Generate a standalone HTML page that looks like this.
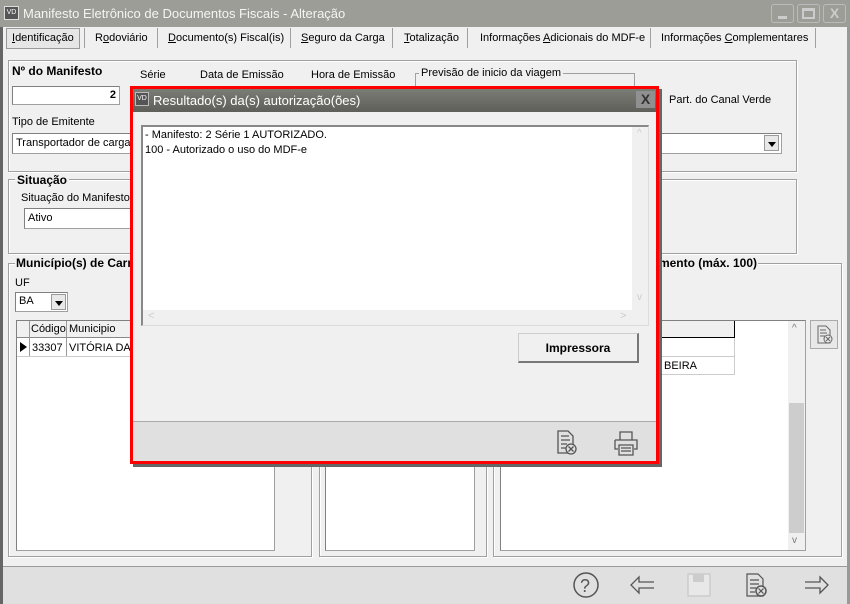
<!DOCTYPE html>
<html><head><meta charset="utf-8"><style>
*{box-sizing:border-box;margin:0;padding:0}
body{width:850px;height:604px;overflow:hidden;background:#f0f0f0;font-family:"Liberation Sans",sans-serif;font-size:11px;color:#000;position:relative}
.a{position:absolute}
.grp{position:absolute;border:1px solid #a0a0a0;box-shadow:inset 1px 1px 0 #fff,1px 1px 0 #fff}
.fld{position:absolute;background:#fff;border:1px solid #a0a0a0;border-top-color:#808080;border-left-color:#808080;padding:2px 3px}
.b{font-weight:bold}
.tab{position:absolute;top:32px;font-size:11px}
.sep{position:absolute;top:28px;width:1px;height:20px;background:#a0a0a0}
.dd{position:absolute;width:15px;height:16px;background:#e8e8e8;border:1px solid #999}
.dd:after{content:"";position:absolute;left:3px;top:6px;border:4px solid transparent;border-top:5px solid #000}
</style></head><body>
<div class="a" style="left:0;top:0;width:850px;height:27px;background:#9d9d97"></div>
<div class="a" style="left:4px;top:6px;width:15px;height:14px;background:#555;color:#fff;font-size:7px;line-height:12px;text-align:center;border:1px solid #ddd">VD</div>
<div class="a" style="left:23px;top:6px;color:#f4f4f4;font-size:13px">Manifesto Eletrônico de Documentos Fiscais - Alteração</div>
<div class="a" style="left:771px;top:4px;width:23px;height:19px;border:1px solid #bbb;border-radius:3px"><div class="a" style="left:6px;top:11px;width:9px;height:3px;background:#ccc"></div></div>
<div class="a" style="left:797px;top:4px;width:23px;height:19px;border:1px solid #bbb;border-radius:3px"><div class="a" style="left:4px;top:3px;width:13px;height:11px;border:2px solid #ccc;border-top-width:3px"></div></div>
<div class="a" style="left:823px;top:4px;width:23px;height:19px;border:1px solid #bbb;border-radius:3px;color:#ccc;font-weight:bold;font-size:14px;text-align:center;line-height:17px">X</div>
<div class="a" style="left:0;top:27px;width:3px;height:577px;background:#666"></div>
<div class="a" style="left:847px;top:27px;width:3px;height:577px;background:#999"></div>
<div class="a" style="left:6px;top:28px;width:74px;height:21px;border:1px solid #999;background:#e6e6e6"></div>
<div class="tab" style="left:12px"><u>I</u>dentificação</div>
<div class="sep" style="left:84px"></div>
<div class="tab" style="left:95px">R<u>o</u>doviário</div>
<div class="sep" style="left:157px"></div>
<div class="tab" style="left:168px"><u>D</u>ocumento(s) Fiscal(is)</div>
<div class="sep" style="left:290px"></div>
<div class="tab" style="left:301px"><u>S</u>eguro da Carga</div>
<div class="sep" style="left:392px"></div>
<div class="tab" style="left:404px"><u>T</u>otalização</div>
<div class="sep" style="left:467px"></div>
<div class="tab" style="left:480px">Informações <u>A</u>dicionais do MDF-e</div>
<div class="sep" style="left:650px"></div>
<div class="tab" style="left:661px">Informações <u>C</u>omplementares</div>
<div class="sep" style="left:815px"></div>
<div class="grp" style="left:8px;top:60px;width:789px;height:112px"></div>
<div class="a b" style="left:12px;top:64px;font-size:12px">Nº do Manifesto</div>
<div class="a" style="left:140px;top:69px">Série</div>
<div class="a" style="left:200px;top:69px">Data de Emissão</div>
<div class="a" style="left:311px;top:69px">Hora de Emissão</div>
<div class="a" style="left:415px;top:73px;width:220px;height:20px;border:1px solid #a0a0a0;border-bottom:none"></div>
<div class="a" style="left:419px;top:67px;background:#f0f0f0;padding:0 2px">Previsão de inicio da viagem</div>
<div class="fld b" style="left:12px;top:86px;width:108px;height:19px;text-align:right">2</div>
<div class="a" style="left:669px;top:94px">Part. do Canal Verde</div>
<div class="a" style="left:12px;top:116px">Tipo de Emitente</div>
<div class="fld" style="left:12px;top:133px;width:770px;height:21px;padding-top:3px">Transportador de carga</div>
<div class="dd" style="left:764px;top:135px"></div>
<div class="grp" style="left:8px;top:179px;width:789px;height:75px"></div>
<div class="a b" style="left:15px;top:173px;background:#f0f0f0;padding:0 2px;font-size:12px">Situação</div>
<div class="a" style="left:21px;top:192px">Situação do Manifesto</div>
<div class="fld" style="left:24px;top:208px;width:200px;height:21px;padding-top:3px">Ativo</div>
<div class="grp" style="left:8px;top:263px;width:304px;height:294px"></div>
<div class="a b" style="left:15px;top:256px;background:#f0f0f0;padding:0 1px;font-size:12px">Município(s) de Carregamento</div>
<div class="a" style="left:15px;top:277px">UF</div>
<div class="fld" style="left:15px;top:292px;width:53px;height:20px;padding-top:2px">BA</div>
<div class="dd" style="left:51px;top:294px"></div>
<div class="fld" style="left:16px;top:320px;width:259px;height:231px;padding:0"></div>
<div class="a" style="left:17px;top:321px;width:258px;height:17px;border-bottom:1px solid #888;background:#f0f0f0"></div>
<div class="a" style="left:29px;top:321px;width:1px;height:36px;background:#999"></div>
<div class="a" style="left:66px;top:321px;width:1px;height:36px;background:#999"></div>
<div class="a" style="left:17px;top:356px;width:258px;height:1px;background:#ccc"></div>
<div class="a" style="left:31px;top:323px">Código</div>
<div class="a" style="left:69px;top:323px">Municipio</div>
<div class="a" style="left:20px;top:342px;border:5px solid transparent;border-left:7px solid #000;border-right:0;height:0"></div>
<div class="a" style="left:32px;top:342px">33307</div>
<div class="a" style="left:69px;top:342px">VITÓRIA DA CONQUISTA</div>
<div class="grp" style="left:319px;top:263px;width:168px;height:294px"></div>
<div class="fld" style="left:325px;top:320px;width:150px;height:231px"></div>
<div class="grp" style="left:493px;top:263px;width:349px;height:294px"></div>
<div class="a b" style="left:520px;top:256px;width:238px;text-align:right;background:#f0f0f0;padding:0 1px;font-size:12px">Percurso / Carregamento (máx. 100)</div>
<div class="fld" style="left:500px;top:320px;width:306px;height:231px;padding:0"></div>
<div class="a" style="left:501px;top:321px;width:234px;height:17px;background:#f0f0f0;border-right:1px solid #000;border-bottom:1px solid #000"></div>
<div class="a" style="left:501px;top:356px;width:234px;height:1px;background:#ccc"></div>
<div class="a" style="left:501px;top:374px;width:234px;height:1px;background:#ccc"></div>
<div class="a" style="left:734px;top:338px;width:1px;height:37px;background:#ccc"></div>
<div class="a" style="left:664px;top:360px">BEIRA</div>
<div class="a" style="left:788px;top:321px;width:17px;height:229px;background:#f0f0f0"></div>
<div class="a" style="left:789px;top:403px;width:15px;height:130px;background:#cdcdcd"></div>
<div class="a" style="left:792px;top:323px;color:#777;font-size:10px">^</div>
<div class="a" style="left:792px;top:535px;color:#777;font-size:10px">v</div>
<div class="a" style="left:810px;top:320px;width:28px;height:29px;border:1px solid #aaa;background:#e8e8e8"></div>
<svg class="a" style="left:810px;top:320px" width="28" height="29" fill="none" stroke="#666" stroke-width="1"><path d="M8 6h8l4 4v13h-12zM10 10h6M10 13h7M10 16h5"/><circle cx="18" cy="19" r="4" fill="#e8e8e8"/><path d="M16 17l4 4M20 17l-4 4"/></svg>
<div class="a" style="left:3px;top:566px;width:844px;height:38px;background:#e0e0e0;border-top:1px solid #999"></div>
<svg class="a" style="left:560px;top:566px" width="290" height="38" fill="none" stroke="#555" stroke-width="1.5">
<circle cx="26" cy="19" r="12"/><text x="20" y="26" font-family="Liberation Sans" font-size="18" fill="#555" stroke="none">?</text>
<path d="M94 16h-15v-5l-8 8 8 8v-5h15" stroke-width="1.3"/>
<rect x="128" y="8" width="22" height="22" stroke="#ccc" fill="#e8e8e8"/><rect x="133" y="8" width="11" height="8" fill="#ccc" stroke="none"/>
<path d="M187 8h11l5 5v17h-16zM190 14h9M190 18h9M190 22h6M190 26h5" stroke-width="1.2"/><circle cx="201" cy="25" r="5" fill="#e0e0e0"/><path d="M198.5 22.5l5 5M203.5 22.5l-5 5" stroke-width="1.2"/>
<path d="M245 16h15v-5l8 8-8 8v-5h-15" stroke-width="1.3"/>
</svg>
<div class="a" style="left:133px;top:89px;width:529px;height:378px;background:#666"></div>
<div class="a" style="left:130px;top:86px;width:529px;height:378px;border:3px solid #f00;background:#f0f0f0"></div>
<div class="a" style="left:133px;top:89px;width:523px;height:23px;background:linear-gradient(#7c7c76,#5f5f5a)"></div>
<div class="a" style="left:135px;top:92px;width:14px;height:14px;background:#555;color:#fff;font-size:7px;line-height:12px;text-align:center;border:1px solid #bbb">VD</div>
<div class="a" style="left:153px;top:93px;color:#fff;font-size:13px">Resultado(s) da(s) autorização(ões)</div>
<div class="a" style="left:636px;top:91px;width:19px;height:17px;background:#909090;color:#333;font-weight:bold;font-size:14px;text-align:center;line-height:17px">X</div>
<div class="a" style="left:141px;top:125px;width:508px;height:201px;border:1px solid #ddd;border-top:2px solid #888;border-left:2px solid #888;background:#f0f0f0"></div>
<div class="a" style="left:143px;top:127px;width:489px;height:183px;background:#fff;padding:1px 2px;line-height:15px">- Manifesto: 2 Série 1 AUTORIZADO.<br>100 - Autorizado o uso do MDF-e</div>
<div class="a" style="left:637px;top:128px;color:#ccc;font-size:10px">^</div>
<div class="a" style="left:637px;top:292px;color:#ccc;font-size:10px">v</div>
<div class="a" style="left:148px;top:310px;color:#ccc;font-size:11px">&lt;</div>
<div class="a" style="left:620px;top:310px;color:#ccc;font-size:11px">&gt;</div>
<div class="a b" style="left:518px;top:333px;width:121px;height:30px;border:1px solid #ccc;border-right:2px solid #777;border-bottom:2px solid #777;background:#f0f0f0;text-align:center;line-height:28px;font-size:12px">Impressora</div>
<div class="a" style="left:133px;top:421px;width:523px;height:40px;background:#e0e0e0;border-top:1px solid #aaa"></div>
<svg class="a" style="left:540px;top:422px" width="110" height="40" fill="none" stroke="#555" stroke-width="1.3">
<path d="M18 9h10l5 5v17h-15zM21 14h8M21 18h9M21 22h6M21 26h5"/><circle cx="31" cy="27" r="5" fill="#e0e0e0"/><path d="M28.5 24.5l5 5M33.5 24.5l-5 5"/>
<path d="M80 18v-8h12v8M75 18h22v9h-3M78 27h-3v-9M79 23h14v10h-14zM81 26h10M81 29h10"/>
</svg>
</body></html>
